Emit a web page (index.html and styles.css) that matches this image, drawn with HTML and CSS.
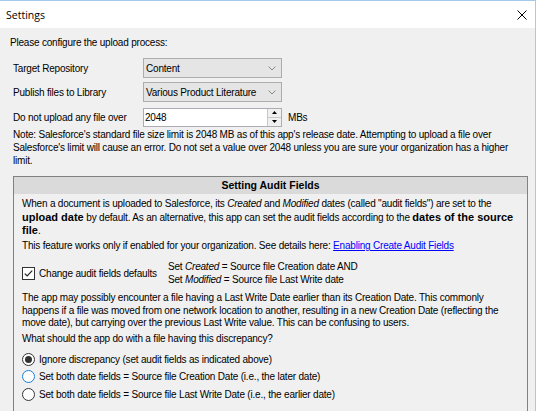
FILE: index.html
```html
<!DOCTYPE html>
<html lang="en">
<head>
<meta charset="utf-8">
<title>Settings</title>
<link rel="stylesheet" href="styles.css">
</head>
<body>
<div class="window">
  <div class="titlebar">
    <span class="title">Settings</span>
    <svg class="close" width="10" height="10" viewBox="0 0 10 10"><path d="M0.5 0.5 L9.5 9.5 M9.5 0.5 L0.5 9.5" stroke="#000" stroke-width="1" fill="none"/></svg>
  </div>
  <div class="client">
    <p class="intro">Please configure the upload process:</p>
    <div class="form">
      <div class="row">
        <span class="label">Target Repository</span>
        <div class="combo"><span>Content</span><svg class="chev" width="8" height="5" viewBox="0 0 8 5"><path d="M0.5 0.5 L4 4 L7.5 0.5" stroke="#8a8a8a" stroke-width="1" fill="none"/></svg></div>
      </div>
      <div class="row">
        <span class="label">Publish files to Library</span>
        <div class="combo"><span>Various Product Literature</span><svg class="chev" width="8" height="5" viewBox="0 0 8 5"><path d="M0.5 0.5 L4 4 L7.5 0.5" stroke="#8a8a8a" stroke-width="1" fill="none"/></svg></div>
      </div>
      <div class="row row-spin">
        <span class="label">Do not upload any file over</span>
        <div class="spin">
          <span class="spin-val">2048</span>
          <div class="spin-btns">
            <div class="spin-btn"><svg width="5" height="3" viewBox="0 0 5 3"><path d="M2.5 0 L5 3 L0 3 Z" fill="#000"/></svg></div>
            <div class="spin-btn"><svg width="5" height="3" viewBox="0 0 5 3"><path d="M0 0 L5 0 L2.5 3 Z" fill="#000"/></svg></div>
          </div>
        </div>
        <span class="unit">MBs</span>
      </div>
    </div>
    <p class="note">Note: Salesforce's standard file size limit is 2048 MB as of this app's release date. Attempting to upload a file over<br>Salesforce's limit will cause an error. Do not set a value over 2048 unless you are sure your organization has a higher<br>limit.</p>
    <section class="panel">
      <div class="panel-head">Setting Audit Fields</div>
      <div class="panel-body">
        <p class="para p1">When a document is uploaded to Salesforce, its <i>Created</i> and <i>Modified</i> dates (called "audit fields") are set to the<br><b>upload date</b> by default. As an alternative, this app can set the audit fields according to the <b>dates of the source</b><br><b>file</b>.</p>
        <p class="para p2">This feature works only if enabled for your organization. See details here: <a class="link" href="#">Enabling Create Audit Fields</a></p>
        <div class="check-row">
          <div class="check">
            <svg class="box" width="13" height="13" viewBox="0 0 13 13"><rect x="0.5" y="0.5" width="12" height="12" fill="#fff" stroke="#333"/><path d="M2.8 6.6 L5.2 9 L10.2 3.6" stroke="#222" stroke-width="1.2" fill="none"/></svg>
            <span>Change audit fields defaults</span>
          </div>
          <div class="sets">Set <i>Created</i> = Source file Creation date AND<br>Set <i>Modified</i> = Source file Last Write date</div>
        </div>
        <p class="para p3">The app may possibly encounter a file having a Last Write Date earlier than its Creation Date. This commonly<br>happens if a file was moved from one network location to another, resulting in a new Creation Date (reflecting the<br>move date), but carrying over the previous Last Write value. This can be confusing to users.</p>
        <p class="para p4">What should the app do with a file having this discrepancy?</p>
        <div class="radios">
          <div class="radio"><svg width="13" height="13" viewBox="0 0 13 13"><circle cx="6.5" cy="6.5" r="6" fill="#fff" stroke="#333"/><circle cx="6.5" cy="6.5" r="3.5" fill="#333"/></svg><span>Ignore discrepancy (set audit fields as indicated above)</span></div>
          <div class="radio"><svg width="13" height="13" viewBox="0 0 13 13"><circle cx="6.5" cy="6.5" r="6" fill="#fff" stroke="#1c7fd6"/></svg><span>Set both date fields = Source file Creation Date (i.e., the later date)</span></div>
          <div class="radio"><svg width="13" height="13" viewBox="0 0 13 13"><circle cx="6.5" cy="6.5" r="6" fill="#fff" stroke="#333"/></svg><span>Set both date fields = Source file Last Write Date (i.e., the earlier date)</span></div>
        </div>
      </div>
    </section>
  </div>
</div>
</body>
</html>
```
FILE: styles.css
```css
* { box-sizing: border-box; }

body {
  margin: 0;
  background: #fff;
  font-family: "Liberation Sans", Arial, sans-serif;
  font-size: 10px;
  letter-spacing: -0.2px;
  color: #000;
}

.window {
  width: 536px;
  height: 411px;
  border-top: 1px solid #a6c8ea;
  border-right: 1px solid #b4c6d8;
  display: flex;
  flex-direction: column;
  overflow: hidden;
}

.titlebar {
  height: 27px;
  flex: none;
  background: #fff;
  display: flex;
  align-items: center;
  justify-content: space-between;
  padding: 0 8px 0 6px;
}

.title {
  font-family: "Open Sans", "Liberation Sans", sans-serif;
  font-size: 10.5px;
  letter-spacing: 0;
}

.close { display: block; }

.client {
  flex: 1;
  background: #f0f0f0;
  padding-top: 8px;
  display: flex;
  flex-direction: column;
  min-height: 0;
}

.intro {
  margin: 0 0 0 10px;
  line-height: 13px;
}

.form {
  margin: 5px 0 0 13px;
}

.row {
  display: flex;
  align-items: center;
  height: 20px;
  margin-top: 4px;
}

.row-spin { margin-top: 5px; }

.label { width: 130px; flex: none; }

.combo {
  width: 139px;
  height: 20px;
  background: #e5e5e5;
  border: 1px solid #acacac;
  display: flex;
  align-items: center;
  justify-content: space-between;
  padding: 0 5px 0 2px;
}

.chev { display: block; }

.spin {
  width: 139px;
  height: 19px;
  background: #fff;
  border: 1px solid #abadb3;
  display: flex;
  align-items: center;
  justify-content: space-between;
  padding-left: 1px;
}

.spin-btns {
  width: 14px;
  height: 17px;
  display: flex;
  flex-direction: column;
  border-left: 1px solid #c8c8c8;
}

.spin-btn {
  flex: 1;
  background: #f0f0f0;
  display: flex;
  align-items: center;
  justify-content: center;
}

.spin-btn + .spin-btn { border-top: 1px solid #c8c8c8; }

.spin-btn svg { display: block; }

.unit { margin-left: 6px; }

.note {
  margin: 1px 8px 0 13px;
  line-height: 13px;
}

.panel {
  margin: 9px 0 0 13px;
  width: 515px;
  flex: 1;
  border: 1px solid #828282;
  border-bottom: none;
}

.panel-head {
  height: 17px;
  background: #dadada;
  font-weight: bold;
  font-size: 10.5px;
  letter-spacing: 0;
  text-align: center;
  line-height: 17px;
}

.panel-body {
  padding: 4px 8px 0 8px;
}

.para {
  margin: 0;
  line-height: 12.5px;
}

.para b {
  font-size: 11px;
  letter-spacing: 0;
}

.p2 { margin-top: 2.5px; }

.link { color: #0000ff; text-decoration: underline; }

.check-row {
  display: flex;
  align-items: center;
  margin-top: 8.5px;
}

.check {
  width: 146px;
  flex: none;
  display: flex;
  align-items: center;
  gap: 4px;
}

.box { display: block; }

.sets { line-height: 12.5px; }

.p3 { margin-top: 6px; }

.p4 { margin-top: 3.5px; }

.radios {
  margin-top: 7px;
  display: flex;
  flex-direction: column;
  gap: 4.5px;
}

.radio {
  display: flex;
  align-items: center;
  gap: 4px;
  height: 13px;
}

.radio svg { display: block; }
```
